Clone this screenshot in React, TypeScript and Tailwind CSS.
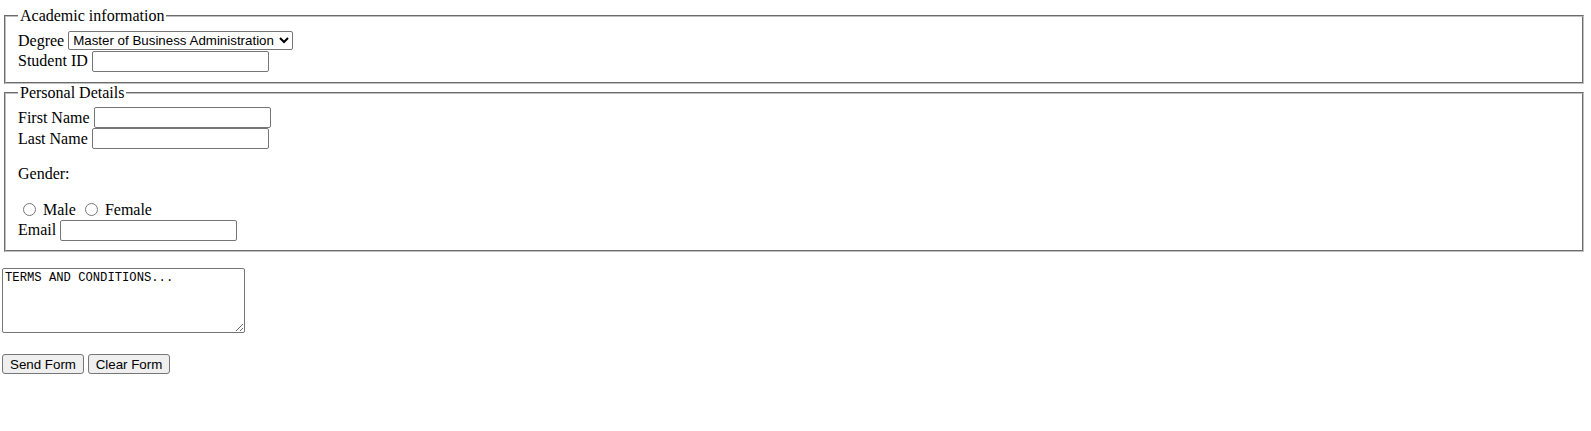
import React from "react";

const ctrlFont = "font-['Liberation_Sans',Arial,sans-serif] text-[13.33px] leading-[normal] text-black";
const inputCls = `${ctrlFont} w-[177px] h-[21px] border border-[#767676] rounded-[2px] bg-white px-[2px]`;
const fieldsetCls =
  "ml-[2px] mr-[5px] border-2 [border-style:groove] border-[#c0c0c0] px-[12px] pt-[5.6px] pb-[10px] min-w-0";

export default function App() {
  return (
    <div className="min-h-[431px] bg-white text-black px-[2px] pt-[7px] font-['Liberation_Serif','Times_New_Roman',serif] text-[16px] leading-[normal]">
      <form onSubmit={(e) => e.preventDefault()}>
        <fieldset className={fieldsetCls}>
          <legend className="px-[2px]">Academic information</legend>
          <div className="flex items-center gap-[4px] h-[20px]">
            <label htmlFor="degree">Degree</label>
            <select
              id="degree"
              defaultValue="mba"
              className={`${ctrlFont} w-[225px] h-[19px] border border-[#767676] rounded-[2px] bg-white`}
            >
              <option value="mba">Master of Business Administration</option>
              <option value="bsc">Bachelor of Science</option>
            </select>
          </div>
          <div className="flex items-center gap-[4px] h-[21px]">
            <label htmlFor="sid">Student ID</label>
            <input id="sid" type="text" className={inputCls} />
          </div>
        </fieldset>

        <fieldset className={fieldsetCls}>
          <legend className="px-[2px]">Personal Details</legend>
          <div className="flex items-center gap-[4px] h-[21px]">
            <label htmlFor="fn">First Name</label>
            <input id="fn" type="text" className={inputCls} />
          </div>
          <div className="flex items-center gap-[4px] h-[21px]">
            <label htmlFor="ln">Last Name</label>
            <input id="ln" type="text" className={inputCls} />
          </div>
          <p className="mt-[16px] h-[18px] flex items-center">Gender:</p>
          <div className="mt-[16px] flex items-center h-[21px]">
            <input id="male" type="radio" name="gender" className="ml-[5px] mr-[3px] w-[13px] h-[13px]" />
            <label htmlFor="male" className="ml-[4px]">Male</label>
            <input id="female" type="radio" name="gender" className="ml-[9px] mr-[3px] w-[13px] h-[13px]" />
            <label htmlFor="female" className="ml-[4px]">Female</label>
          </div>
          <div className="flex items-center gap-[4px] h-[20px]">
            <label htmlFor="email">Email</label>
            <input id="email" type="text" className={inputCls} />
          </div>
        </fieldset>

        <div className="mt-[16px]">
          <textarea
            defaultValue="TERMS AND CONDITIONS..."
            className="block w-[243px] h-[65px] border border-[#767676] rounded-[2px] bg-white p-[2px] resize font-['Liberation_Mono','DejaVu_Sans_Mono',monospace] text-[12.2px] leading-[15px] text-black"
          />
        </div>

        <div className="mt-[21px] flex gap-[4px]">
          <button
            type="submit"
            className={`${ctrlFont} w-[82px] h-[20px] bg-[#efefef] border border-[#767676] rounded-[3px] px-[6px]`}
          >
            Send Form
          </button>
          <button
            type="reset"
            className={`${ctrlFont} w-[82px] h-[20px] bg-[#efefef] border border-[#767676] rounded-[3px] px-[6px]`}
          >
            Clear Form
          </button>
        </div>
      </form>
    </div>
  );
}
